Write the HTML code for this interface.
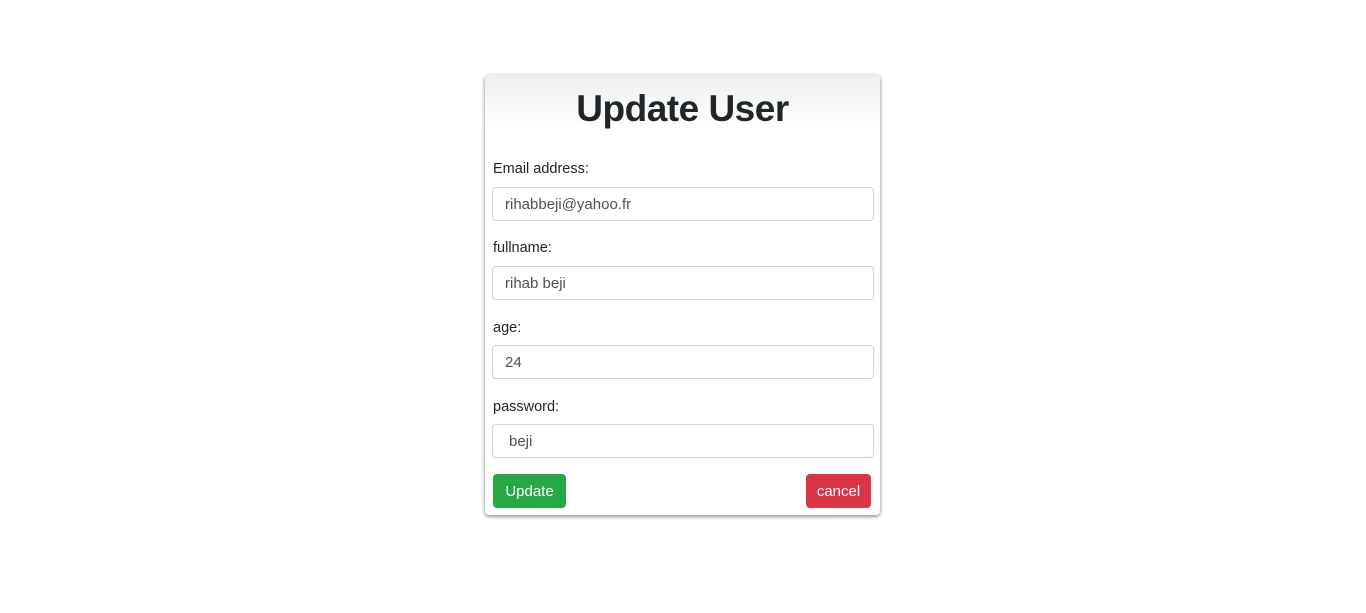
<!DOCTYPE html>
<html><head><style>
body{margin:0;width:1366px;height:613px;background:#fff;font-family:"Liberation Sans",sans-serif;color:#212529;position:relative}
.card{position:absolute;left:485px;top:75px;width:395px;height:440px;border-radius:4px;box-shadow:0 1px 4px rgba(0,0,0,.35),0 2px 3px rgba(0,0,0,.2);background:#fff}
.hd{height:55px;background:linear-gradient(#eef0f0,#fff);border-radius:4px 4px 0 0;text-align:center}
h1{margin:0;font-size:37px;font-weight:bold;line-height:68px;letter-spacing:-0.5px}
.lbl{position:absolute;left:8px;font-size:14.5px}
.inp{position:absolute;left:7px;width:382px;height:34px;border:1px solid #ced4da;border-radius:4px;box-sizing:border-box;font-size:15px;color:#495057;padding-left:12px;line-height:34px}
.btn{position:absolute;top:399px;height:34px;border-radius:4px;color:#fff;font-size:15px;line-height:36px;text-align:center}
</style></head><body>
<div class="card">
<div class="hd"><h1>Update User</h1></div>
<div class="lbl" style="top:86px">Email address:</div>
<div class="inp" style="top:112px">rihabbeji@yahoo.fr</div>
<div class="lbl" style="top:165px">fullname:</div>
<div class="inp" style="top:191px">rihab beji</div>
<div class="lbl" style="top:245px">age:</div>
<div class="inp" style="top:270px">24</div>
<div class="lbl" style="top:324px">password:</div>
<div class="inp" style="top:349px;padding-left:16px">beji</div>
<div class="btn" style="left:8px;width:73px;background:#28a745">Update</div>
<div class="btn" style="left:321px;width:65px;background:#dc3545">cancel</div>
</div>
</body></html>
